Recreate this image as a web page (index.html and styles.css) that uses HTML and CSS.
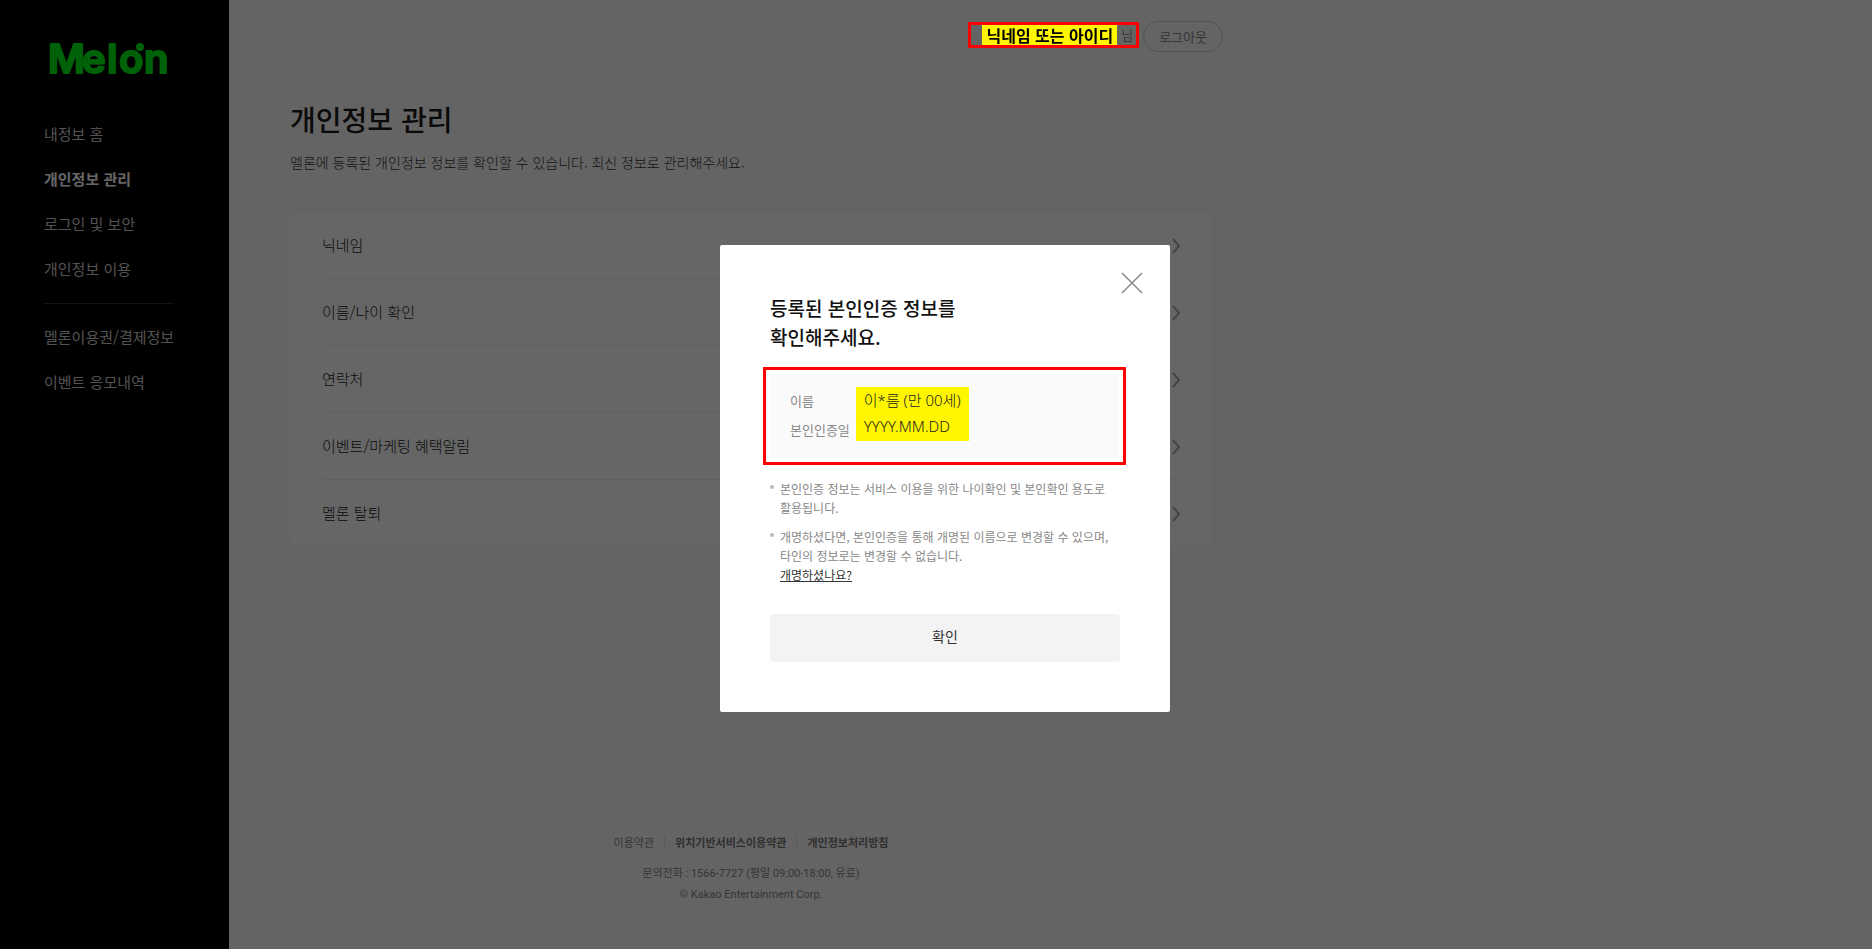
FILE: index.html
```html
<!DOCTYPE html>
<html lang="ko">
<head>
<meta charset="utf-8">
<title>개인정보 관리</title>
<link rel="stylesheet" href="styles.css">
</head>
<body>
<div class="page">
  <aside class="sidebar">
    <a class="logo" href="#">
      <svg width="128" height="44" role="img" aria-label="Melon">
        <text class="logo-word" x="4 38 63 75 100" y="33">Melon</text>
        <circle class="logo-dot" cx="96" cy="7" r="4"/>
      </svg>
    </a>
    <nav class="menu">
      <a class="menu-link" href="#">내정보 홈</a>
      <a class="menu-link current" href="#">개인정보 관리</a>
      <a class="menu-link" href="#">로그인 및 보안</a>
      <a class="menu-link" href="#">개인정보 이용</a>
      <hr class="menu-rule">
      <a class="menu-link" href="#">멜론이용권/결제정보</a>
      <a class="menu-link" href="#">이벤트 응모내역</a>
    </nav>
  </aside>
  <div class="main">
    <header class="topbar">
      <div class="user"><strong class="user-name">닉네임 또는 아이디</strong><span class="user-suffix">님</span></div>
      <button class="logout" type="button">로그아웃</button>
    </header>
    <main class="content">
      <h1 class="title">개인정보 관리</h1>
      <p class="lead">멜론에 등록된 개인정보 정보를 확인할 수 있습니다. 최신 정보로 관리해주세요.</p>
      <ul class="card">
        <li class="row"><a class="row-link" href="#">닉네임<svg class="chevron" viewBox="0 0 8 14"><path d="M1 0l6 7-6 7"/></svg></a></li>
        <li class="row"><a class="row-link" href="#">이름/나이 확인<svg class="chevron" viewBox="0 0 8 14"><path d="M1 0l6 7-6 7"/></svg></a></li>
        <li class="row"><a class="row-link" href="#">연락처<svg class="chevron" viewBox="0 0 8 14"><path d="M1 0l6 7-6 7"/></svg></a></li>
        <li class="row"><a class="row-link" href="#">이벤트/마케팅 혜택알림<svg class="chevron" viewBox="0 0 8 14"><path d="M1 0l6 7-6 7"/></svg></a></li>
        <li class="row"><a class="row-link" href="#">멜론 탈퇴<svg class="chevron" viewBox="0 0 8 14"><path d="M1 0l6 7-6 7"/></svg></a></li>
      </ul>
    </main>
    <footer class="footer">
      <nav class="policies">
        <a class="policy" href="#">이용약관</a>
        <a class="policy strong" href="#">위치기반서비스이용약관</a>
        <a class="policy strong" href="#">개인정보처리방침</a>
      </nav>
      <p class="footer-line">문의전화 : 1566-7727 (평일 09:00-18:00, 유료)</p>
      <p class="footer-line">© Kakao Entertainment Corp.</p>
    </footer>
  </div>
</div>
<div class="overlay">
  <section class="dialog" role="dialog" aria-modal="true" aria-labelledby="dialog-title">
    <button class="close" type="button" aria-label="닫기"><svg class="close-icon" viewBox="0 0 22 22"><path d="M1 1l20 20M21 1L1 21"/></svg></button>
    <h2 class="dialog-title" id="dialog-title">등록된 본인인증 정보를<br>확인해주세요.</h2>
    <div class="info">
      <dl class="info-labels">
        <dt>이름</dt>
        <dt>본인인증일</dt>
      </dl>
      <div class="info-values">
        <span>이*름 (만 00세)</span>
        <span>YYYY.MM.DD</span>
      </div>
    </div>
    <ul class="notes">
      <li class="note">본인인증 정보는 서비스 이용을 위한 나이확인 및 본인확인 용도로 활용됩니다.</li>
      <li class="note">개명하셨다면, 본인인증을 통해 개명된 이름으로 변경할 수 있으며, 타인의 정보로는 변경할 수 없습니다.<br><a class="note-link" href="#">개명하셨나요?</a></li>
    </ul>
    <button class="confirm" type="button">확인</button>
  </section>
</div>
</body>
</html>
```
FILE: styles.css
```css
* { box-sizing: border-box; }
body, h1, h2, p, ul, dl, dd { margin: 0; padding: 0; }
ul { list-style: none; }
a { color: inherit; text-decoration: none; }
body {
  font-family: "Noto Sans CJK KR", "Noto Sans", sans-serif;
  font-size: 14px;
  font-weight: 300;
  color: #1a1a1a;
  background: #fafafa;
  word-break: keep-all;
}
button { font: inherit; cursor: pointer; }

.page { display: flex; min-height: 100vh; }

.sidebar { width: 229px; flex: none; background: #000; padding: 40px 44px; }
.logo { display: block; height: 44px; }
.logo svg { display: block; overflow: visible; }
.logo-word {
  font-family: Inter, sans-serif;
  font-size: 40px;
  font-weight: 600;
  fill: #00f514;
  stroke: #00f514;
  stroke-width: 2px;
  stroke-linejoin: round;
}
.logo-dot { fill: #00f514; }
.menu { display: flex; flex-direction: column; align-items: flex-start; gap: 23px; padding-top: 39px; }
.menu-link { font-size: 15px; line-height: 22px; font-weight: 400; color: #ccc; white-space: nowrap; }
.menu-link.current { font-weight: 700; color: #fff; }
.menu-rule { width: 130px; height: 1px; border: 0; margin: 0 0 -1px; background: #333; }

.main { width: 1044px; padding: 0 61px; display: flex; flex-direction: column; }
.topbar { display: flex; justify-content: flex-end; align-items: flex-start; gap: 4px; padding-top: 21px; margin-right: -11px; }
.user {
  position: relative;
  z-index: 2;
  display: flex;
  align-items: center;
  gap: 4px;
  height: 26px;
  margin-top: 1px;
  padding-left: 11px;
  padding-right: 3px;
  border: 3px solid #f00;
}
.user-name { padding: 0 4px; font-size: 16px; line-height: 20px; font-weight: 700; color: #000; background: #fff600; }
.user-suffix { font-size: 13px; line-height: 20px; font-weight: 400; color: #3a3a3a; }
.logout {
  height: 31px;
  padding: 0 15px;
  font-size: 13px;
  line-height: 18px;
  font-weight: 400;
  color: #888;
  background: none;
  border: 1px solid #ccc;
  border-radius: 16px;
}

.content { padding-top: 46px; }
.title { font-size: 28px; line-height: 42px; font-weight: 500; color: #1a1a1a; }
.lead { padding-top: 11px; line-height: 22px; color: #333; }
.card { margin-top: 39px; padding: 0 32px; background: #fff; border-radius: 6px; }
.row + .row { border-top: 1px solid #f0f0f0; }
.row-link { display: flex; justify-content: space-between; align-items: center; height: 66px; padding-bottom: 1px; font-size: 15px; }
.chevron { width: 8px; height: 14px; margin-top: 2px; overflow: visible; fill: none; stroke: #aaa; stroke-width: 2px; }

.footer { margin-top: auto; padding-bottom: 44px; text-align: center; color: #888; }
.policies { display: flex; justify-content: center; align-items: center; padding-bottom: 11px; }
.policy { font-size: 11px; line-height: 20px; font-weight: 400; }
.policy.strong { font-weight: 700; color: #777; }
.policy + .policy::before { content: ""; display: inline-block; width: 1px; height: 10px; margin: 0 10px; background: #ddd; }
.footer-line { font-family: Roboto, "Noto Sans CJK KR", sans-serif; font-size: 11px; line-height: 21px; font-weight: 400; }

.overlay {
  position: fixed;
  inset: 0;
  z-index: 1;
  display: flex;
  justify-content: center;
  align-items: center;
  padding: 8px 0 0 18px;
  background: rgba(0, 0, 0, 0.6);
}
.dialog { position: relative; width: 450px; padding: 48px 50px 50px; background: #fff; border-radius: 2px; }
.close { position: absolute; top: 27px; right: 27px; display: flex; padding: 0; border: 0; background: none; }
.close-icon { width: 22px; height: 22px; fill: none; stroke: #888; stroke-width: 1.5px; }
.dialog-title { font-size: 19px; line-height: 29px; font-weight: 500; color: #111; }
.info {
  display: flex;
  align-items: flex-start;
  gap: 6px;
  margin: 16px -6px 0 -7px;
  padding: 16px 24px 18px;
  background: #fafafa;
  border: 3px solid #f00;
  box-shadow: inset 0 0 0 4px #fff;
}
.info-labels { font-size: 13px; line-height: 29px; font-weight: 400; color: #888; }
.info-values { display: flex; flex-direction: column; margin-top: 1px; padding: 0 8px 2px; font-family: "Noto Sans", "Noto Sans CJK KR", sans-serif; font-size: 15px; line-height: 26px; color: #222; background: #fff600; }
.notes { display: flex; flex-direction: column; gap: 10px; padding-top: 14px; font-size: 12px; line-height: 19px; font-weight: 400; color: #888; }
.note { position: relative; padding-left: 10px; }
.note::before { content: ""; position: absolute; left: 0; top: 6px; width: 4px; height: 4px; border-radius: 50%; background: #bbb; }
.note-link { color: #333; text-decoration: underline; }
.confirm { display: block; width: 100%; height: 48px; margin-top: 30px; padding-bottom: 6px; font-size: 14px; font-weight: 400; color: #333; background: #f3f3f3; border: 0; border-radius: 4px; }
```
